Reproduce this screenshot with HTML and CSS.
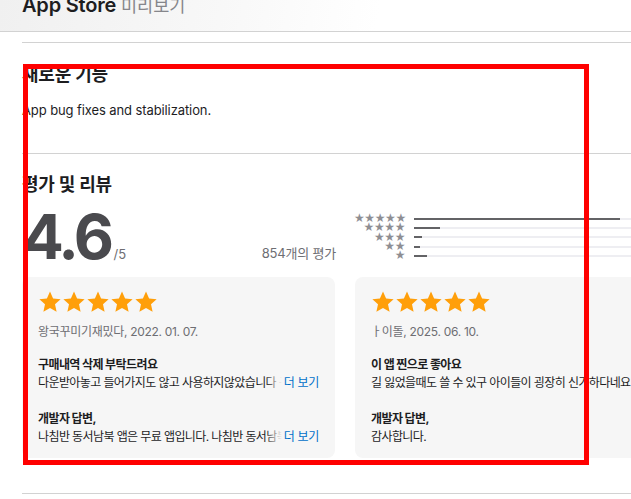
FILE: index.html
```html
<!DOCTYPE html>
<html lang="ko">
<head>
<meta charset="utf-8">
<link rel="stylesheet" href="styles.css">
</head>
<body>
<header class="header">
  <h1 class="brand"><span class="brand-main">App Store</span> <span class="brand-sub">미리보기</span></h1>
</header>
<main class="main">
  <section class="section whatsnew">
    <h2 class="section-title">새로운 기능</h2>
    <p class="whatsnew-text">App bug fixes and stabilization.</p>
  </section>
  <section class="section ratings">
    <h2 class="section-title">평가 및 리뷰</h2>
    <div class="rating-row">
      <div class="rating-summary">
        <div class="score"><span class="score-num">4.6</span><span class="score-max">/5</span></div>
        <div class="count">854개의 평가</div>
      </div>
      <div class="histogram">
        <div class="hist-row"><span class="hist-stars">★★★★★</span><span class="bar"><span class="fill" style="width:74%"></span></span></div>
        <div class="hist-row"><span class="hist-stars">★★★★</span><span class="bar"><span class="fill" style="width:9.5%"></span></span></div>
        <div class="hist-row"><span class="hist-stars">★★★</span><span class="bar"><span class="fill" style="width:3%"></span></span></div>
        <div class="hist-row"><span class="hist-stars">★★</span><span class="bar"><span class="fill" style="width:2%"></span></span></div>
        <div class="hist-row"><span class="hist-stars">★</span><span class="bar"><span class="fill" style="width:4.7%"></span></span></div>
      </div>
    </div>
    <div class="reviews">
      <article class="card">
        <div class="stars">
          <svg viewBox="0 0 24 24"><path d="M12 1.6l3.1 6.9 7.5.8-5.6 5 1.6 7.4L12 17.9l-6.6 3.8 1.6-7.4-5.6-5 7.5-.8z"/></svg>
          <svg viewBox="0 0 24 24"><path d="M12 1.6l3.1 6.9 7.5.8-5.6 5 1.6 7.4L12 17.9l-6.6 3.8 1.6-7.4-5.6-5 7.5-.8z"/></svg>
          <svg viewBox="0 0 24 24"><path d="M12 1.6l3.1 6.9 7.5.8-5.6 5 1.6 7.4L12 17.9l-6.6 3.8 1.6-7.4-5.6-5 7.5-.8z"/></svg>
          <svg viewBox="0 0 24 24"><path d="M12 1.6l3.1 6.9 7.5.8-5.6 5 1.6 7.4L12 17.9l-6.6 3.8 1.6-7.4-5.6-5 7.5-.8z"/></svg>
          <svg viewBox="0 0 24 24"><path d="M12 1.6l3.1 6.9 7.5.8-5.6 5 1.6 7.4L12 17.9l-6.6 3.8 1.6-7.4-5.6-5 7.5-.8z"/></svg>
        </div>
        <p class="meta">왕국꾸미기재밌다, 2022. 01. 07.</p>
        <h3 class="review-title">구매내역 삭제 부탁드려요</h3>
        <p class="review-body clip">다운받아놓고 들어가지도 않고 사용하지않았습니다 구매내역에서 삭제 부탁드립니다<span class="more">더 보기</span></p>
        <h3 class="review-title dev">개발자 답변,</h3>
        <p class="review-body clip">나침반 동서남북 앱은 무료 앱입니다. 나침반 동서남북 앱을 이용해 주셔서 감사합니다<span class="more">더 보기</span></p>
      </article>
      <article class="card">
        <div class="stars">
          <svg viewBox="0 0 24 24"><path d="M12 1.6l3.1 6.9 7.5.8-5.6 5 1.6 7.4L12 17.9l-6.6 3.8 1.6-7.4-5.6-5 7.5-.8z"/></svg>
          <svg viewBox="0 0 24 24"><path d="M12 1.6l3.1 6.9 7.5.8-5.6 5 1.6 7.4L12 17.9l-6.6 3.8 1.6-7.4-5.6-5 7.5-.8z"/></svg>
          <svg viewBox="0 0 24 24"><path d="M12 1.6l3.1 6.9 7.5.8-5.6 5 1.6 7.4L12 17.9l-6.6 3.8 1.6-7.4-5.6-5 7.5-.8z"/></svg>
          <svg viewBox="0 0 24 24"><path d="M12 1.6l3.1 6.9 7.5.8-5.6 5 1.6 7.4L12 17.9l-6.6 3.8 1.6-7.4-5.6-5 7.5-.8z"/></svg>
          <svg viewBox="0 0 24 24"><path d="M12 1.6l3.1 6.9 7.5.8-5.6 5 1.6 7.4L12 17.9l-6.6 3.8 1.6-7.4-5.6-5 7.5-.8z"/></svg>
        </div>
        <p class="meta">ㅏ이돌, 2025. 06. 10.</p>
        <h3 class="review-title">이 앱 찐으로 좋아요</h3>
        <p class="review-body">길 잃었을때도 쓸 수 있구 아이들이 굉장히 신기하다네요.</p>
        <h3 class="review-title dev">개발자 답변,</h3>
        <p class="review-body">감사합니다.</p>
      </article>
    </div>
  </section>
  <div class="bottom-rule"></div>
</main>
<div class="highlight"></div>
</body>
</html>
```

FILE: styles.css
```css
* { box-sizing: border-box; }
html, body { margin: 0; padding: 0; }
body {
  width: 631px;
  height: 499px;
  overflow: hidden;
  position: relative;
  background: #fff;
  font-family: "Inter", "Noto Sans CJK KR", sans-serif;
  color: #1d1d1f;
}
.header {
  height: 32px;
  border-bottom: 1px solid #d2d2d2;
  background: linear-gradient(100deg, #f0f0f0 0%, #f8f8f8 35%, #ffffff 60%);
  overflow: hidden;
}
.brand {
  margin: -9px 0 0 22px;
  font-size: 20px;
  line-height: 28px;
  font-weight: 600;
  letter-spacing: -0.2px;
  white-space: nowrap;
}
.brand-main { color: #1d1d1f; }
.brand-sub { color: #86868b; font-weight: 400; font-size: 17.5px; letter-spacing: 0; }
.main {
  margin-left: 22px;
  width: 700px;
  padding-top: 10px;
}
.section { border-top: 1px solid #d2d2d2; }
.section-title {
  margin: 0;
  font-size: 18px;
  line-height: 22px;
  font-weight: 700;
  letter-spacing: -0.2px;
}
.whatsnew { padding-top: 21px; height: 111px; }
.whatsnew-text {
  margin: 15px 0 0;
  font-size: 13px;
  line-height: 18px;
  letter-spacing: -0.1px;
  color: #1d1d1f;
}
.ratings { padding-top: 20px; }
.rating-row {
  display: grid;
  grid-template-columns: 313px 1fr;
  column-gap: 19px;
  margin-top: 4px;
  height: 66px;
}
.rating-summary {
  display: flex;
  align-items: flex-end;
  justify-content: space-between;
  padding-bottom: 4px;
}
.score { display: flex; align-items: baseline; margin-bottom: -5px; }
.score-num {
  font-size: 62px;
  line-height: 60px;
  font-weight: 700;
  letter-spacing: -3.5px;
  color: #4a4a4e;
}
.score-max { font-size: 13px; color: #6e6e73; margin-left: 3px; }
.count {
  font-size: 13px;
  line-height: 16px;
  color: #6e6e73;
  letter-spacing: -0.2px;
  margin-right: -1px;
  padding-bottom: 1px;
}
.histogram {
  display: flex;
  flex-direction: column;
  padding-top: 14px;
}
.hist-row {
  display: flex;
  align-items: center;
  height: 9.3px;
}
.hist-stars {
  width: 51px;
  text-align: right;
  font-size: 12px;
  line-height: 9px;
  letter-spacing: -0.4px;
  color: #8e8e93;
  font-family: "DejaVu Sans", sans-serif;
}
.bar {
  margin-left: 9px;
  width: 278px;
  height: 2px;
  background: #eeeef2;
  display: block;
}
.fill { display: block; height: 2px; background: #636366; }
.reviews {
  display: grid;
  grid-template-columns: 313px 313px;
  column-gap: 20px;
  margin-top: 11px;
}
.card {
  background: #f6f6f6;
  border-radius: 8px;
  height: 181px;
  padding: 13px 16px 0 16px;
  letter-spacing: -0.6px;
}
.stars { display: flex; height: 24px; }
.stars svg { width: 24px; height: 24px; fill: #ff9f0a; }
.meta {
  margin: 10px 0 0;
  font-size: 12px;
  line-height: 16px;
  letter-spacing: -0.3px;
  color: #6e6e73;
}
.review-title {
  margin: 16px 0 0;
  font-size: 12px;
  line-height: 18px;
  font-weight: 700;
}
.review-title.dev { margin-top: 18px; }
.review-body {
  margin: 0;
  font-size: 12px;
  line-height: 18px;
  color: #1d1d1f;
  white-space: nowrap;
}
.clip { position: relative; overflow: hidden; }
.more {
  position: absolute;
  right: 0;
  top: 0;
  padding-left: 18px;
  letter-spacing: -0.3px;
  background: linear-gradient(to right, rgba(246,246,246,0) 0, #f6f6f6 16px);
  color: #0070c9;
}
.bottom-rule {
  margin-top: 35px;
  border-top: 1px solid #d2d2d2;
}
.highlight {
  position: absolute;
  left: 23px;
  top: 64px;
  width: 566px;
  height: 401px;
  border: 5px solid #ff0000;
}
```
